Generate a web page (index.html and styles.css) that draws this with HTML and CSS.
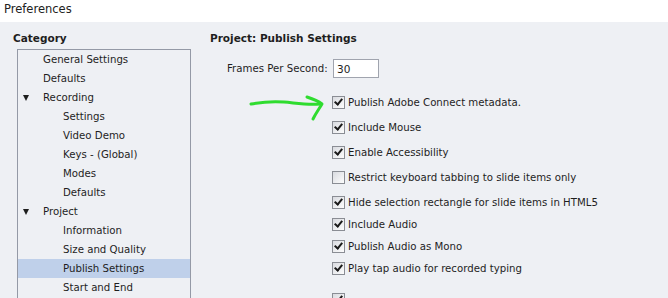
FILE: index.html
```html
<!DOCTYPE html>
<html lang="en">
<head>
    <meta charset="UTF-8">
    <title>Preferences</title>
    <link rel="stylesheet" href="styles.css">
</head>
<body>
<div class="window">
    <!-- Title bar -->
    <div class="titlebar">Preferences</div>

    <div class="main">
        <!-- Category tree -->
        <div class="category">
            <h3>Category</h3>
            <ul class="tree">
                <li class="lvl1">General Settings</li>
                <li class="lvl1">Defaults</li>
                <li class="lvl1 open"><span class="tri"></span>Recording</li>
                <li class="lvl2">Settings</li>
                <li class="lvl2">Video Demo</li>
                <li class="lvl2">Keys - (Global)</li>
                <li class="lvl2">Modes</li>
                <li class="lvl2">Defaults</li>
                <li class="lvl1 open"><span class="tri"></span>Project</li>
                <li class="lvl2">Information</li>
                <li class="lvl2">Size and Quality</li>
                <li class="lvl2 selected">Publish Settings</li>
                <li class="lvl2">Start and End</li>
            </ul>
        </div>

        <!-- Settings panel -->
        <div class="settings">
            <h3>Project: Publish Settings</h3>
            <div class="fps">
                <label for="fps">Frames Per Second:</label>
                <input type="text" id="fps" value="30">
            </div>
            <div class="checks">
                <div class="check on">Publish Adobe Connect metadata.</div>
                <div class="check on">Include Mouse</div>
                <div class="check on">Enable Accessibility</div>
                <div class="check">Restrict keyboard tabbing to slide items only</div>
                <div class="check on tight">Hide selection rectangle for slide items in HTML5</div>
                <div class="check on tight">Include Audio</div>
                <div class="check on tight">Publish Audio as Mono</div>
                <div class="check on tight">Play tap audio for recorded typing</div>
                <div class="check on gap">&nbsp;</div>
            </div>
        </div>
    </div>

    <!-- hand drawn arrow -->
    <svg class="scribble" width="668" height="298" viewBox="0 0 668 298">
        <path d="M251 104 C262 102 272 101 284 102 C296 103 306 105 320 104" />
        <path d="M307 97 C313 99 318 101 322 104 C319 109 316 113 313 119" />
    </svg>
</div>
</body>
</html>
```

FILE: styles.css
```css
body {
    margin: 0;
    font-family: "DejaVu Sans", sans-serif;
    font-size: 10.2px;
    color: #1e1e1e;
}
.window {
    position: relative;
    width: 668px;
    height: 298px;
    overflow: hidden;
    background: #eef0f4;
}
.titlebar {
    height: 22px;
    line-height: 18px;
    padding-left: 4px;
    background: #fff;
    font-size: 11.5px;
    color: #222;
}
.main {
    display: flex;
}
h3 {
    margin: 0;
    font-size: 10.5px;
    font-weight: bold;
    line-height: 16px;
}
.category {
    width: 192px;
    padding: 8px 0 0 13px;
    box-sizing: border-box;
}
.tree {
    list-style: none;
    margin: 3px 0 0 4px;
    padding: 0;
    width: 174px;
    height: 260px;
    border: 1px solid #9499a6;
    box-sizing: border-box;
}
.tree li {
    height: 19px;
    line-height: 19px;
    white-space: nowrap;
    position: relative;
}
.tree .lvl1 {
    padding-left: 25px;
}
.tree .lvl2 {
    padding-left: 45px;
}
.tree .selected {
    background: #bfd0ea;
}
.tri {
    position: absolute;
    left: 5px;
    top: 7px;
    border-left: 3.5px solid transparent;
    border-right: 3.5px solid transparent;
    border-top: 6px solid #1e1e1e;
}
.settings {
    padding: 8px 0 0 18px;
}
.fps {
    display: flex;
    align-items: center;
    margin: 13px 0 0 17px;
}
.fps label {
    width: 106px;
    white-space: nowrap;
}
.fps input {
    width: 46px;
    height: 19px;
    box-sizing: border-box;
    border: 1px solid #a0a4ae;
    padding: 0 3px;
    font-family: inherit;
    font-size: 10.5px;
    color: #1e1e1e;
}
.checks {
    margin: 15px 0 0 122px;
}
.check {
    position: relative;
    height: 19px;
    line-height: 19px;
    padding-left: 16px;
    margin-bottom: 6px;
    white-space: nowrap;
}
.check.tight {
    margin-bottom: 3px;
}
.check.gap {
    margin-top: 12px;
}
.check::before {
    content: "";
    position: absolute;
    left: 0;
    top: 3px;
    width: 13px;
    height: 13px;
    box-sizing: border-box;
    border: 1px solid #8a8d94;
    background: linear-gradient(135deg, #d9dbe0, #fdfdfd);
}
.check.on::after {
    content: "";
    position: absolute;
    left: 4px;
    top: 4px;
    width: 3px;
    height: 6px;
    border-right: 2px solid #1a1a1a;
    border-bottom: 2px solid #1a1a1a;
    transform: rotate(40deg);
}
.scribble {
    position: absolute;
    left: 0;
    top: 0;
    pointer-events: none;
}
.scribble path {
    fill: none;
    stroke: #2fdc2f;
    stroke-width: 3;
    stroke-linecap: round;
    stroke-linejoin: round;
}
```
